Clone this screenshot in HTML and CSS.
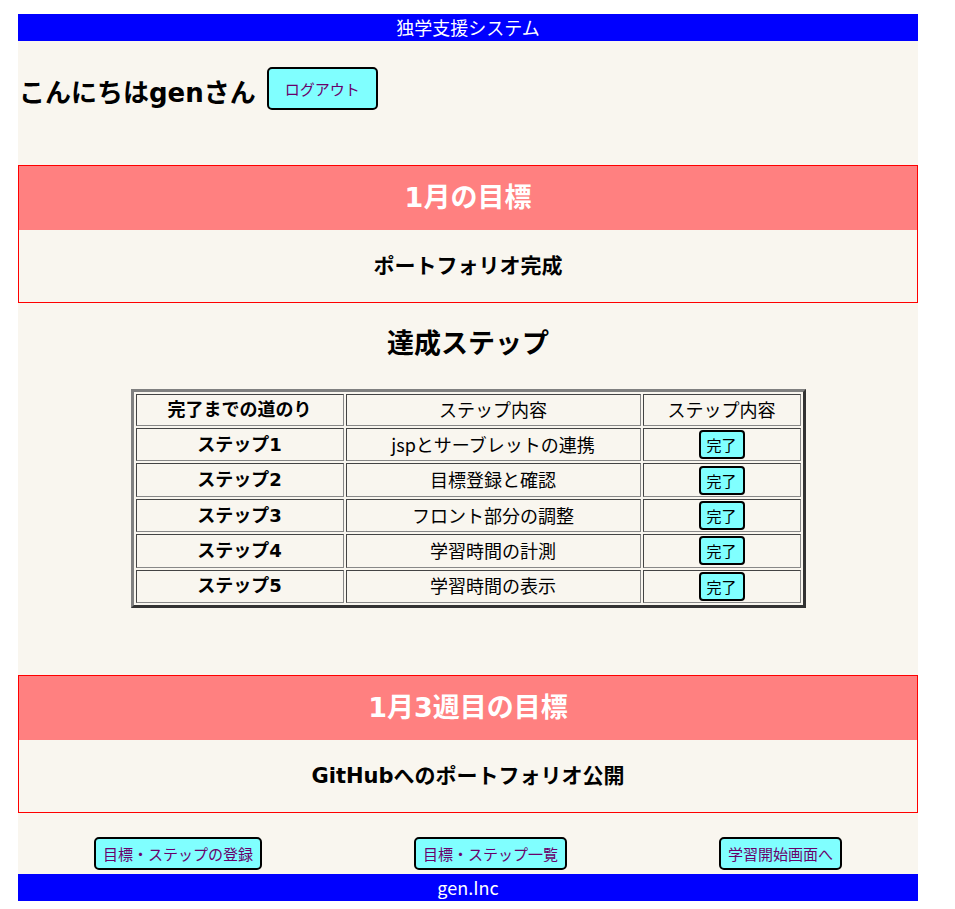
FILE: index.html
```html
<!DOCTYPE html>
<html lang="ja">
<head>
<meta charset="utf-8">
<title>独学支援システム</title>
<link rel="stylesheet" href="styles.css">
</head>
<body>
<div class="page">
  <header class="top-bar">独学支援システム</header>
  <div class="greeting">
    <h1 class="greeting-title">こんにちはgenさん</h1>
    <button class="btn btn-logout">ログアウト</button>
  </div>

  <section class="goal goal-month">
    <div class="goal-head">1月の目標</div>
    <div class="goal-body">ポートフォリオ完成</div>
  </section>

  <h2 class="steps-title">達成ステップ</h2>

  <table class="steps">
    <tr>
      <th>完了までの道のり</th>
      <td>ステップ内容</td>
      <td>ステップ内容</td>
    </tr>
    <tr>
      <th>ステップ1</th>
      <td>jspとサーブレットの連携</td>
      <td><button class="btn btn-done">完了</button></td>
    </tr>
    <tr>
      <th>ステップ2</th>
      <td>目標登録と確認</td>
      <td><button class="btn btn-done">完了</button></td>
    </tr>
    <tr>
      <th>ステップ3</th>
      <td>フロント部分の調整</td>
      <td><button class="btn btn-done">完了</button></td>
    </tr>
    <tr>
      <th>ステップ4</th>
      <td>学習時間の計測</td>
      <td><button class="btn btn-done">完了</button></td>
    </tr>
    <tr>
      <th>ステップ5</th>
      <td>学習時間の表示</td>
      <td><button class="btn btn-done">完了</button></td>
    </tr>
  </table>

  <section class="goal goal-week">
    <div class="goal-head">1月3週目の目標</div>
    <div class="goal-body">GitHubへのポートフォリオ公開</div>
  </section>

  <nav class="bottom-nav">
    <button class="btn btn-nav">目標・ステップの登録</button>
    <button class="btn btn-nav">目標・ステップ一覧</button>
    <button class="btn btn-nav">学習開始画面へ</button>
  </nav>

  <footer class="bottom-bar">gen.Inc</footer>
</div>
</body>
</html>
```

FILE: styles.css
```css
html, body {
  margin: 0;
  padding: 0;
  background: #ffffff;
}

body {
  padding: 14px 0 0 18px;
  font-family: "DejaVu Sans", "Noto Sans CJK JP", sans-serif;
  color: #000;
}

.page {
  width: 900px;
  background: #f9f6ef;
}

.top-bar {
  height: 27px;
  line-height: 27px;
  background: #0000ff;
  color: #fff;
  text-align: center;
  font-family: "Noto Sans CJK JP", sans-serif;
  font-size: 18px;
}

.greeting {
  display: flex;
  align-items: center;
  gap: 11px;
  padding: 26px 0 0 1px;
  height: 43px;
}

.greeting-title {
  margin: 0;
  font-size: 26px;
  font-weight: bold;
  line-height: 43px;
  padding-top: 9px;
}

.btn {
  font-family: "Noto Sans CJK JP", sans-serif;
  background: #80ffff;
  border: 2px solid #000;
  border-radius: 5px;
  cursor: pointer;
  padding: 0;
}

.btn-logout {
  width: 111px;
  height: 43px;
  font-size: 15px;
  color: #6a006a;
}

.goal {
  margin-top: 55px;
  border: 1px solid #ff0000;
  text-align: center;
  font-weight: bold;
}

.goal-head {
  height: 64px;
  line-height: 64px;
  background: #ff8080;
  color: #fff;
  font-size: 27px;
}

.goal-body {
  height: 72px;
  line-height: 72px;
  font-size: 21px;
}

.steps-title {
  margin: 24px 0 28px;
  height: 34px;
  line-height: 34px;
  text-align: center;
  font-size: 27px;
  font-weight: bold;
}

.steps {
  margin: 0 auto;
  width: 675px;
  border: 3px solid;
  border-color: #808080 #333 #333 #808080;
  border-spacing: 2px;
  font-family: "Noto Sans CJK JP", sans-serif;
  font-size: 18px;
}

.steps th,
.steps td {
  border: 1px solid;
  border-color: #444 #888 #888 #444;
  text-align: center;
  padding: 0;
  height: 31.4px;
  line-height: 1.2;
}

.steps th {
  font-family: "DejaVu Sans", "Noto Sans CJK JP", sans-serif;
  font-weight: bold;
  width: 206px;
}

.steps td:nth-child(2) {
  width: 293px;
}

.steps tr:first-child th,
.steps tr:first-child td {
  height: 30px;
}

.btn-done {
  width: 46px;
  height: 29px;
  font-size: 15px;
  color: #000;
  border-radius: 4px;
  vertical-align: middle;
}

.goal-week {
  margin-top: 67px;
}

.bottom-nav {
  display: flex;
  justify-content: space-around;
  padding: 24px 0 4px;
}

.btn-nav {
  height: 33px;
  padding: 0 7px;
  font-size: 15px;
  color: #6a006a;
}

.bottom-bar {
  height: 27px;
  line-height: 27px;
  background: #0000ff;
  color: #fff;
  text-align: center;
  font-family: "Noto Sans CJK JP", sans-serif;
  font-size: 18px;
}
```
